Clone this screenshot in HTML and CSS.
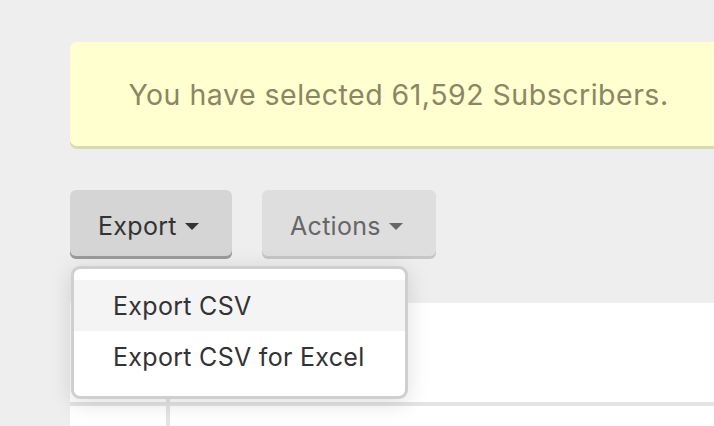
FILE: index.html
```html
<!DOCTYPE html>
<html lang="en">

<head>
  <meta charset="UTF-8">
  <meta name="viewport" content="width=device-width, initial-scale=1.0">
  <title>Subscribers</title>
  <link rel="stylesheet" href="styles.css">
</head>

<body>
  <div class="page">
    <div class="notice">You have selected 61,592 Subscribers.</div>

    <div class="toolbar">
      <div class="dropdown">
        <button class="btn btn-active">Export <span class="caret"></span></button>
        <ul class="menu">
          <li class="menu-item hover">Export CSV</li>
          <li class="menu-item">Export CSV for Excel</li>
        </ul>
      </div>
      <button class="btn btn-muted">Actions <span class="caret"></span></button>
    </div>

    <div class="table">
      <div class="row head">
        <div class="cell check"></div>
        <div class="cell"></div>
      </div>
      <div class="row">
        <div class="cell check"></div>
        <div class="cell"></div>
      </div>
    </div>
  </div>
</body>

</html>
```

FILE: styles.css
```css
html {
  box-sizing: border-box;
}

*,
*::before,
*::after {
  box-sizing: inherit;
}

body {
  margin: 0;
  height: 100vh;
  overflow: hidden;
  background-color: #eeeeee;
  font-family: Inter, "Open Sans", sans-serif;
}

.page {
  padding: 42px 0 0 70px;
  width: 900px;
}

.notice {
  width: 657px;
  height: 104px;
  display: flex;
  align-items: center;
  justify-content: center;
  background-color: #ffffd0;
  border-radius: 7px;
  box-shadow: 0 3px 0 #d9d9b3;
  color: #8b8663;
  font-size: 28.5px;
  letter-spacing: 0.5px;
}

.toolbar {
  display: flex;
  gap: 30px;
  margin-top: 44px;
}

.dropdown {
  position: relative;
}

.btn {
  height: 66px;
  padding: 5px 28px 0;
  border: none;
  border-radius: 6px;
  font-family: inherit;
  font-size: 25px;
  letter-spacing: 0.3px;
  display: flex;
  align-items: center;
  gap: 8px;
  cursor: pointer;
}

.btn-active {
  width: 162px;
  background-color: #d5d5d5;
  color: #333333;
  box-shadow: 0 3px 0 #9a9a9a;
}

.btn-muted {
  width: 174px;
  background-color: #dedede;
  color: #666666;
  box-shadow: 0 3px 0 #c6c6c6;
}

.caret {
  width: 0;
  height: 0;
  margin-top: 2px;
  border-left: 7px solid transparent;
  border-right: 7px solid transparent;
  border-top: 7px solid currentColor;
}

.menu {
  position: absolute;
  top: 76px;
  left: 1px;
  z-index: 2;
  width: 337px;
  margin: 0;
  padding: 11px 0 14px;
  list-style: none;
  background-color: #ffffff;
  border: 3px solid #cfcfcf;
  border-radius: 9px;
  box-shadow: 0 4px 22px rgba(0 0 0 / 0.13);
}

.menu-item {
  height: 51px;
  padding-left: 39px;
  display: flex;
  align-items: center;
  color: #333333;
  font-size: 25px;
  letter-spacing: 0.3px;
}

.menu-item.hover {
  background-color: #f4f4f4;
}

.table {
  margin-top: 47px;
  background-color: #ffffff;
}

.row {
  display: flex;
  height: 103px;
}

.row.head {
  border-bottom: 4px solid #e4e4e4;
}

.cell {
  flex: 1;
}

.cell.check {
  flex: 0 0 100px;
  border-right: 4px solid #e4e4e4;
}
```
